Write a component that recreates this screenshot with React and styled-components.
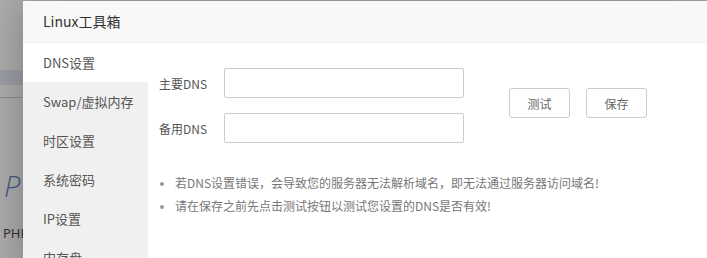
import React from 'react';
import styled, { createGlobalStyle } from 'styled-components';

const GlobalStyle = createGlobalStyle`
  html, body {
    margin: 0;
    padding: 0;
    overflow: hidden;
  }
  body {
    font-family: "Noto Sans CJK SC", "Noto Sans", sans-serif;
  }
`;

const StyledPage = styled.div`
  position: relative;
  width: 707px;
  height: 258px;
  overflow: hidden;
  background: #adadad;
  display: flex;
  flex-direction: column;
`;

const StyledBand = styled.div`
  margin-top: 70px;
  height: 15px;
  background: #9d9fa6;
`;

const StyledRule = styled.div`
  margin-top: 12px;
  height: 1px;
  background: #8e8e8e;
`;

const StyledLogo = styled.div`
  margin: 74px 0 0 4px;
  font-family: "Open Sans", "Liberation Sans", sans-serif;
  font-style: italic;
  font-weight: 300;
  font-size: 29px;
  line-height: 28px;
  color: #4b5a86;
`;

const StyledLogoCaption = styled.div`
  margin: 24px 0 0 3px;
  font-family: "Noto Sans", sans-serif;
  font-size: 13px;
  line-height: 18px;
  color: #3a2f30;
`;

const StyledModal = styled.div`
  position: absolute;
  left: 23px;
  top: 1px;
  width: 684px;
  height: 280px;
  background: #fff;
  box-shadow: 1px 1px 40px rgba(0, 0, 0, 0.3);
  display: flex;
  flex-direction: column;
`;

const StyledHeader = styled.div`
  height: 41px;
  line-height: 41px;
  padding-left: 20px;
  background: #f8f8f8;
  border-bottom: 1px solid #eee;
  font-size: 14px;
  color: #333;
`;

const StyledBody = styled.div`
  flex: 1;
  display: flex;
`;

const StyledMenu = styled.ul`
  width: 125px;
  margin: 0;
  padding: 0;
  list-style: none;
  background: #f0f0f0;
`;

const StyledMenuItem = styled.li`
  height: 39px;
  line-height: 39px;
  padding-left: 20px;
  font-size: 13px;
  color: #555;
  background: ${({ active }) => (active ? '#fff' : 'transparent')};
`;

const StyledContent = styled.div`
  flex: 1;
  padding: 25px 0 0 11px;
`;

const StyledFormArea = styled.div`
  display: flex;
  align-items: flex-start;
`;

const StyledForm = styled.div`
  display: flex;
  flex-direction: column;
  gap: 15px;
`;

const StyledRow = styled.label`
  display: flex;
  align-items: center;
`;

const StyledLabel = styled.span`
  width: 65px;
  font-size: 12px;
  color: #555;
`;

const StyledInput = styled.input`
  box-sizing: border-box;
  width: 240px;
  height: 30px;
  border: 1px solid #ccc;
  border-radius: 2px;
  padding: 0 8px;
  outline: none;
`;

const StyledActions = styled.div`
  display: flex;
  gap: 16px;
  margin: 20px 0 0 45px;
`;

const StyledButton = styled.button`
  box-sizing: border-box;
  width: 61px;
  height: 30px;
  border: 1px solid #ccc;
  border-radius: 3px;
  background: #fff;
  font-family: inherit;
  font-size: 12px;
  color: #666;
  padding: 0;
`;

const StyledNotes = styled.ul`
  margin: 28px 0 0;
  padding: 0 0 0 16px;
  font-size: 12px;
  line-height: 23px;
  color: #777;

  li::marker {
    color: #999;
    font-size: 11px;
  }
`;

const menu = ['DNS设置', 'Swap/虚拟内存', '时区设置', '系统密码', 'IP设置', '内存盘'];

const App = () => (
  <>
    <GlobalStyle />
    <StyledPage>
      <StyledBand />
      <StyledRule />
      <StyledLogo>P</StyledLogo>
      <StyledLogoCaption>PHP</StyledLogoCaption>
      <StyledModal>
        <StyledHeader>Linux工具箱</StyledHeader>
        <StyledBody>
          <StyledMenu>
            {menu.map((item, i) => (
              <StyledMenuItem key={item} active={i === 0}>
                {item}
              </StyledMenuItem>
            ))}
          </StyledMenu>
          <StyledContent>
            <StyledFormArea>
              <StyledForm>
                <StyledRow>
                  <StyledLabel>主要DNS</StyledLabel>
                  <StyledInput type="text" />
                </StyledRow>
                <StyledRow>
                  <StyledLabel>备用DNS</StyledLabel>
                  <StyledInput type="text" />
                </StyledRow>
              </StyledForm>
              <StyledActions>
                <StyledButton>测试</StyledButton>
                <StyledButton>保存</StyledButton>
              </StyledActions>
            </StyledFormArea>
            <StyledNotes>
              <li>若DNS设置错误，会导致您的服务器无法解析域名，即无法通过服务器访问域名!</li>
              <li>请在保存之前先点击测试按钮以测试您设置的DNS是否有效!</li>
            </StyledNotes>
          </StyledContent>
        </StyledBody>
      </StyledModal>
    </StyledPage>
  </>
);

export default App;
